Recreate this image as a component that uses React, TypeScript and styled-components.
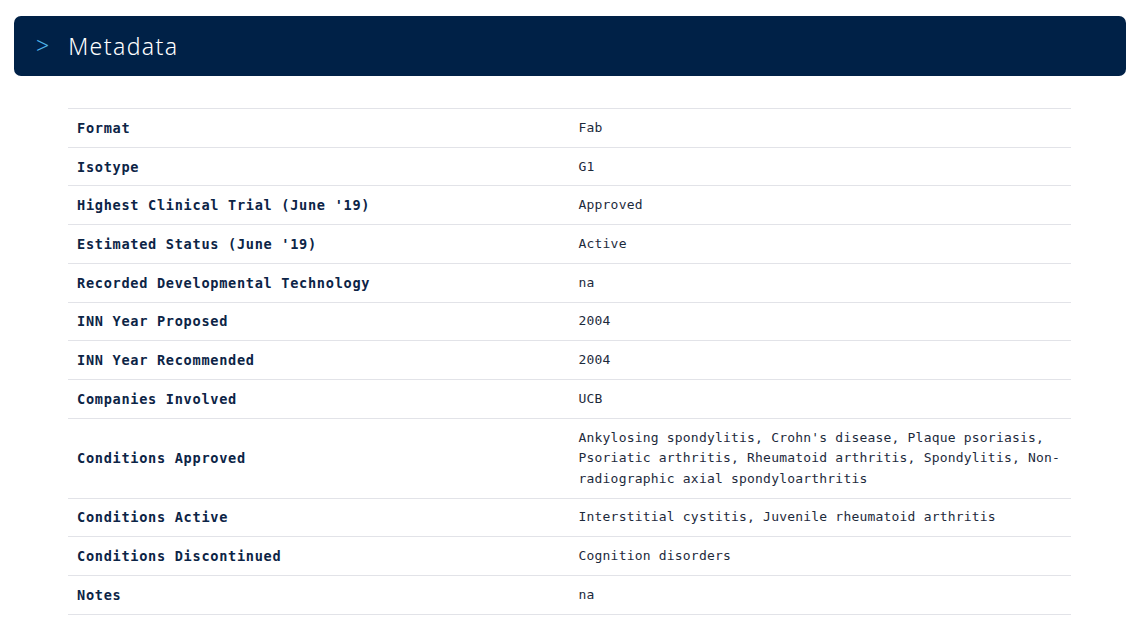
import React from "react";
import styled, { createGlobalStyle } from "styled-components";

const GlobalStyle = createGlobalStyle`
  html, body {
    margin: 0;
    padding: 0;
    background: #ffffff;
  }
  body {
    font-family: "DejaVu Sans Mono", "Liberation Mono", monospace;
  }
`;

const Page = styled.div`
  padding: 16px 18px 24px 14px;
  display: flex;
  flex-direction: column;
  gap: 32px;
`;

const SectionHeader = styled.div`
  height: 60px;
  background: #002147;
  border-radius: 7px;
  display: flex;
  align-items: center;
  padding: 0 22px;
  gap: 19px;
  box-sizing: border-box;
`;

const Chevron = styled.span`
  color: #4fb3e8;
  font-family: "Noto Sans", "DejaVu Sans", sans-serif;
  font-weight: 300;
  font-size: 23px;
  line-height: 1;
  margin-top: -2px;
`;

const SectionTitle = styled.h2`
  margin: 0;
  color: #ffffff;
  font-family: "Noto Sans", "Open Sans", sans-serif;
  font-weight: 300;
  font-size: 23px;
  letter-spacing: 1.4px;
`;

const TableWrap = styled.div`
  padding: 0 55px 0 54px;
`;

const Table = styled.table`
  width: 100%;
  border-collapse: collapse;
  border-top: 1px solid #e2e3e8;
`;

const Row = styled.tr`
  border-bottom: 1px solid #e2e3e8;
`;

const Label = styled.th`
  width: 50%;
  text-align: left;
  padding: 8.8px 9px 8.45px;
  font-family: "DejaVu Sans Mono", monospace;
  font-weight: bold;
  font-size: 13.6px;
  line-height: 20.5px;
  letter-spacing: 0.7px;
  color: #0c2446;
  vertical-align: middle;
`;

const Value = styled.td`
  text-align: left;
  padding: 8.8px 9px 8.45px;
  font-family: "DejaVu Sans Mono", monospace;
  font-size: 13px;
  line-height: 20.5px;
  letter-spacing: 0.2px;
  color: #1d2a3c;
  vertical-align: middle;
`;

const rows: [string, string][] = [
  ["Format", "Fab"],
  ["Isotype", "G1"],
  ["Highest Clinical Trial (June '19)", "Approved"],
  ["Estimated Status (June '19)", "Active"],
  ["Recorded Developmental Technology", "na"],
  ["INN Year Proposed", "2004"],
  ["INN Year Recommended", "2004"],
  ["Companies Involved", "UCB"],
  [
    "Conditions Approved",
    "Ankylosing spondylitis, Crohn's disease, Plaque psoriasis, Psoriatic arthritis, Rheumatoid arthritis, Spondylitis, Non-radiographic axial spondyloarthritis",
  ],
  ["Conditions Active", "Interstitial cystitis, Juvenile rheumatoid arthritis"],
  ["Conditions Discontinued", "Cognition disorders"],
  ["Notes", "na"],
];

export default function App() {
  return (
    <>
      <GlobalStyle />
      <Page>
        <SectionHeader>
          <Chevron>&gt;</Chevron>
          <SectionTitle>Metadata</SectionTitle>
        </SectionHeader>
        <TableWrap>
          <Table>
            <tbody>
              {rows.map(([label, value]) => (
                <Row key={label}>
                  <Label>{label}</Label>
                  <Value>{value}</Value>
                </Row>
              ))}
            </tbody>
          </Table>
        </TableWrap>
      </Page>
    </>
  );
}
